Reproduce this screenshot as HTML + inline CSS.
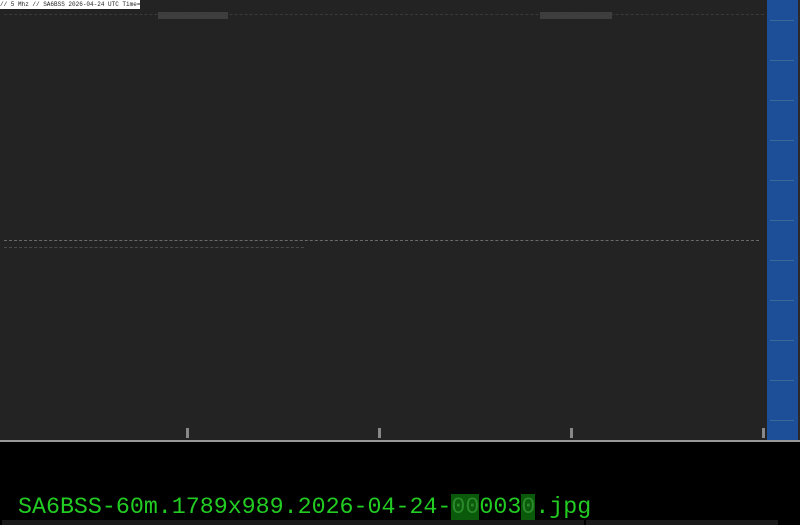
<!DOCTYPE html>
<html><head><meta charset="utf-8"><style>
html,body{margin:0;padding:0;background:#000;width:800px;height:525px;overflow:hidden;position:relative;font-family:"Liberation Mono",monospace}
.wf{position:absolute;left:0;top:0;width:767px;height:440px;background:#232323}
.strip{position:absolute;left:767px;top:0;width:31px;height:440px;background:#1d4e98}
.edge{position:absolute;left:798px;top:0;width:2px;height:440px;background:#2a2a2a}
.bline{position:absolute;left:0;top:440px;width:800px;height:2px;background:#999}
.lbl{position:absolute;left:0;top:0;width:140px;height:9px;background:#fff;font-size:6px;line-height:9px;color:#222;white-space:nowrap;overflow:hidden}
.dash{position:absolute;height:1px;border-top:1px dashed #6a6a6a}
.fuzz{position:absolute;height:7px;background:#5a5a5a;opacity:.5}
.tick{position:absolute;top:428px;width:3px;height:10px;background:#888}
.fn{position:absolute;left:18px;top:494px;font-size:23.3px;color:#22cc22;white-space:pre;letter-spacing:0}
.fn span{background:#0b5a0b;color:#2a8a2a}
.bar{position:absolute;top:520px;height:5px;background:#1a1a1a}
.sl{position:absolute;left:770px;width:24px;height:1px;background:#3a6a9a}
</style></head><body>
<div class="wf"></div>
<div class="strip"></div>
<div class="edge"></div>
<div class="bline"></div>
<div class="lbl">// 5 Mhz // SA6BSS 2026-04-24 UTC Time=23:50</div>
<div class="fuzz" style="left:158px;top:12px;width:70px"></div>
<div class="fuzz" style="left:540px;top:12px;width:72px"></div>
<div class="dash" style="left:4px;top:14px;width:760px;border-color:#3a3a3a"></div>
<div class="dash" style="left:4px;top:240px;width:755px"></div>
<div class="dash" style="left:4px;top:247px;width:300px;border-color:#4a4a4a"></div>
<div class="tick" style="left:186px"></div>
<div class="tick" style="left:378px"></div>
<div class="tick" style="left:570px"></div>
<div class="tick" style="left:762px"></div>
<div class="sl" style="top:20px"></div><div class="sl" style="top:60px"></div><div class="sl" style="top:100px"></div><div class="sl" style="top:140px"></div><div class="sl" style="top:180px"></div><div class="sl" style="top:220px"></div><div class="sl" style="top:260px"></div><div class="sl" style="top:300px"></div><div class="sl" style="top:340px"></div><div class="sl" style="top:380px"></div><div class="sl" style="top:420px"></div>
<div class="fn">SA6BSS-60m.1789x989.2026-04-24-<span>00</span>003<span>0</span>.jpg</div>
<div class="bar" style="left:2px;width:582px"></div>
<div class="bar" style="left:586px;width:192px"></div>
</body></html>
